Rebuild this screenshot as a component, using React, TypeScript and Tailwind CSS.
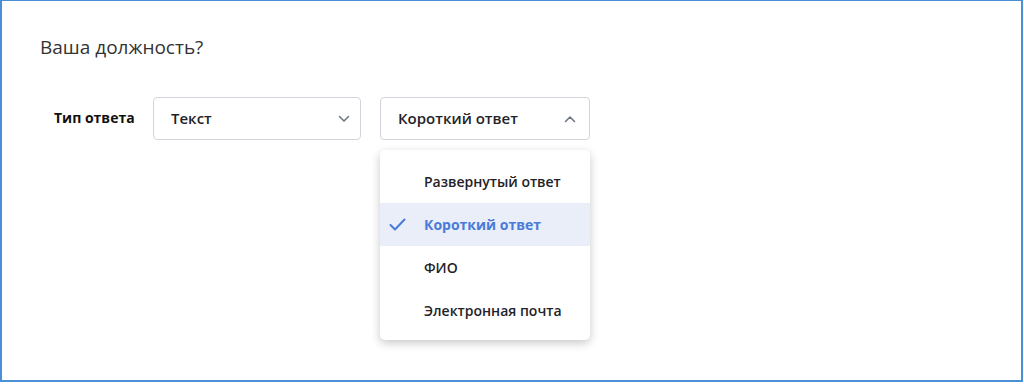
import React from "react";

function ChevronDown() {
  return (
    <svg width="12" height="8" viewBox="0 0 12 8" fill="none">
      <path d="M1.5 1.5L6 6L10.5 1.5" stroke="#6b7280" strokeWidth="1.5" strokeLinecap="round" strokeLinejoin="round" />
    </svg>
  );
}
function ChevronUp() {
  return (
    <svg width="12" height="8" viewBox="0 0 12 8" fill="none">
      <path d="M1.5 6.5L6 2L10.5 6.5" stroke="#6b7280" strokeWidth="1.5" strokeLinecap="round" strokeLinejoin="round" />
    </svg>
  );
}
function Check() {
  return (
    <svg width="17" height="13" viewBox="0 0 17 13" fill="none">
      <path d="M1.5 7L6 11.5L15.5 1.5" stroke="#4a7bd8" strokeWidth="2" strokeLinecap="round" strokeLinejoin="round" />
    </svg>
  );
}

export default function App() {
  const items = ["Развернутый ответ", "Короткий ответ", "ФИО", "Электронная почта"];
  return (
    <div className="w-[1024px] h-[384px] bg-white" style={{ fontFamily: "'Open Sans', 'Noto Sans', sans-serif" }}>
      <div className="w-[1023px] h-[382px] border-2 border-t border-[#4a90d9] pl-[38px] pt-[33px]">
        <div className="text-[19px] leading-[26px] text-[#333] font-normal">Ваша должность?</div>
        <div className="flex items-start mt-[37px]">
          <div className="w-[113px] pl-[14px] pt-[12px] text-[14px] leading-[18px] font-bold text-[#111]">Тип ответа</div>
          <div className="w-[208px] h-[43px] border border-[#d1d5db] rounded-[4px] flex items-center justify-between pl-[17px] pr-[10px]">
            <span className="text-[15px] font-semibold text-[#1f2328]">Текст</span>
            <ChevronDown />
          </div>
          <div className="relative ml-[19px]">
            <div className="w-[210px] h-[43px] border border-[#d1d5db] rounded-[4px] flex items-center justify-between pl-[17px] pr-[13px]">
              <span className="text-[15px] font-semibold text-[#1f2328]">Короткий ответ</span>
              <ChevronUp />
            </div>
            <div className="absolute left-0 top-[53px] w-[210px] bg-white rounded-[5px] shadow-[0_3px_10px_rgba(0,0,0,0.22)] pt-[10px] pb-[8px]">
              {items.map((it, i) => {
                const sel = i === 1;
                return (
                  <div
                    key={it}
                    className={`h-[43px] flex items-center ${sel ? "bg-[#e9eef9]" : ""}`}
                  >
                    <div className="w-[44px] pl-[9px] flex items-center">{sel ? <Check /> : null}</div>
                    <span className={`text-[14px] ${sel ? "text-[#4a7bd8] font-bold" : "text-[#1f2328] font-semibold"}`}>{it}</span>
                  </div>
                );
              })}
            </div>
          </div>
        </div>
      </div>
    </div>
  );
}
